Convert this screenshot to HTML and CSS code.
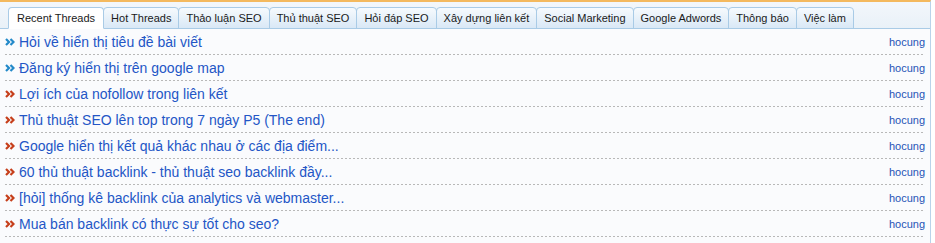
FILE: index.html
```html
<!DOCTYPE html>
<html>
<head>
<meta charset="utf-8">
<link rel="stylesheet" href="styles.css">
</head>
<body>
<div class="box">
  <div class="tabbar">
    <span class="tab active">Recent Threads</span>
    <span class="tab">Hot Threads</span>
    <span class="tab">Thảo luận SEO</span>
    <span class="tab">Thủ thuật SEO</span>
    <span class="tab">Hỏi đáp SEO</span>
    <span class="tab">Xây dựng liên kết</span>
    <span class="tab">Social Marketing</span>
    <span class="tab">Google Adwords</span>
    <span class="tab">Thông báo</span>
    <span class="tab">Việc làm</span>
  </div>
  <div class="content">
    <ul class="list">
      <li class="row"><svg class="arr blue" viewBox="0 0 10 8"><path d="M1 1l3 3-3 3M5.5 1l3 3-3 3"/></svg><a class="title">Hỏi về hiển thị tiêu đề bài viết</a><span class="user">hocung</span></li>
      <li class="row"><svg class="arr blue" viewBox="0 0 10 8"><path d="M1 1l3 3-3 3M5.5 1l3 3-3 3"/></svg><a class="title">Đăng ký hiển thị trên google map</a><span class="user">hocung</span></li>
      <li class="row"><svg class="arr red" viewBox="0 0 10 8"><path d="M1 1l3 3-3 3M5.5 1l3 3-3 3"/></svg><a class="title">Lợi ích của nofollow trong liên kết</a><span class="user">hocung</span></li>
      <li class="row"><svg class="arr red" viewBox="0 0 10 8"><path d="M1 1l3 3-3 3M5.5 1l3 3-3 3"/></svg><a class="title">Thủ thuật SEO lên top trong 7 ngày P5 (The end)</a><span class="user">hocung</span></li>
      <li class="row"><svg class="arr red" viewBox="0 0 10 8"><path d="M1 1l3 3-3 3M5.5 1l3 3-3 3"/></svg><a class="title">Google hiển thị kết quả khác nhau ở các địa điểm...</a><span class="user">hocung</span></li>
      <li class="row"><svg class="arr red" viewBox="0 0 10 8"><path d="M1 1l3 3-3 3M5.5 1l3 3-3 3"/></svg><a class="title">60 thủ thuật backlink - thủ thuật seo backlink đầy...</a><span class="user">hocung</span></li>
      <li class="row"><svg class="arr red" viewBox="0 0 10 8"><path d="M1 1l3 3-3 3M5.5 1l3 3-3 3"/></svg><a class="title">[hỏi] thống kê backlink của analytics và webmaster...</a><span class="user">hocung</span></li>
      <li class="row"><svg class="arr red" viewBox="0 0 10 8"><path d="M1 1l3 3-3 3M5.5 1l3 3-3 3"/></svg><a class="title">Mua bán backlink có thực sự tốt cho seo?</a><span class="user">hocung</span></li>
    </ul>
  </div>
</div>
</body>
</html>
```

FILE: styles.css
```css
html, body {
  margin: 0;
  padding: 0;
  background: #ffffff;
}
body {
  font-family: "Liberation Sans", Arial, sans-serif;
}
.box {
  width: 931px;
  height: 243px;
  border-right: 1px solid #b9d3ea;
  border-top: 2px solid #f4b95e;
  box-sizing: border-box;
  background: #fafbfd;
  overflow: hidden;
}
.tabbar {
  display: flex;
  align-items: flex-end;
  height: 27px;
  padding-left: 8px;
  background: linear-gradient(#f3f7fb, #e9f1f8);
  border-bottom: 1px solid #a9cbe6;
  box-sizing: border-box;
}
.tab {
  height: 22px;
  line-height: 21px;
  padding: 0 7px;
  margin-bottom: -1px;
  font-size: 11px;
  color: #1a1a1a;
  border: 1px solid #a9cbe6;
  border-radius: 4px 4px 0 0;
  background: linear-gradient(#f6fafd, #d9e8f6);
  white-space: nowrap;
  box-sizing: border-box;
}
.tab + .tab {
  margin-left: -1px;
}
.tab.active {
  background: #ffffff;
  border-bottom-color: #ffffff;
  padding: 0 8px;
  position: relative;
  z-index: 1;
}
.content {
  padding: 0 5px 0 5px;
}
.list {
  list-style: none;
  margin: 0;
  padding: 0;
}
.row {
  display: flex;
  align-items: center;
  height: 26px;
  padding: 0 0 1px 0;
  box-sizing: border-box;
  background-image: repeating-linear-gradient(to right, #b8b8b8 0 2px, transparent 2px 4px);
  background-size: 100% 1px;
  background-repeat: no-repeat;
  background-position: left bottom;
}
.arr {
  width: 10px;
  height: 8px;
  margin-right: 4px;
  flex: none;
}
.arr path {
  fill: none;
  stroke-width: 2.2;
}
.arr.blue path { stroke: #2389c9; }
.arr.red path { stroke: #c63f1b; }
.title {
  flex: 1;
  font-size: 14px;
  color: #2356c6;
  white-space: nowrap;
}
.user {
  font-size: 11px;
  color: #1f54b6;
}
```
